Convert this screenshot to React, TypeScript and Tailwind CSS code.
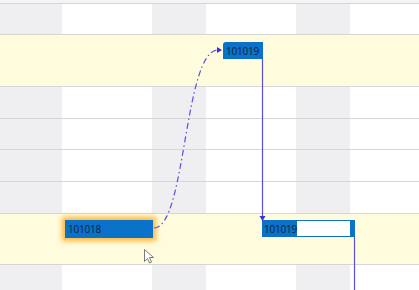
import React from "react";

const cols = [
  { w: "w-[62px]", gray: true },
  { w: "w-[90px]", gray: false },
  { w: "w-[54px]", gray: true },
  { w: "w-[90px]", gray: false },
  { w: "w-[54px]", gray: true },
  { w: "flex-1", gray: false },
];

const rows = [
  { h: "h-[31px]", hl: false },
  { h: "h-[52px]", hl: true },
  { h: "h-[32px]", hl: false },
  { h: "h-[31px]", hl: false },
  { h: "h-[32px]", hl: false },
  { h: "h-[32px]", hl: false },
  { h: "h-[51px]", hl: true },
  { h: "h-[40px]", hl: false },
];

function Row({ h, hl }: { h: string; hl: boolean }) {
  if (hl) {
    return <div className={`${h} border-b border-[#d6d6d6] bg-[#fefcdd]`} />;
  }
  return (
    <div className={`${h} flex border-b border-[#d6d6d6]`}>
      {cols.map((c, i) => (
        <div key={i} className={`${c.w} ${c.gray ? "bg-[#efeff1]" : "bg-white"}`} />
      ))}
    </div>
  );
}

export default function App() {
  return (
    <div
      className="relative h-[290px] w-[419px] overflow-hidden bg-white"
      style={{ fontFamily: '"Open Sans", "Noto Sans", sans-serif' }}
    >
      <div className="h-[4px] border-b border-[#d6d6d6] bg-[#f4f4f5]" />
      {rows.map((r, i) => (
        <Row key={i} h={r.h} hl={r.hl} />
      ))}

      {/* task bars */}
      <div className="absolute left-[223px] top-[42px] flex h-[17px] w-[40px] items-center rounded-tl-[3px] bg-[#0a72c8] pl-[3px] text-[10px] leading-none tracking-[-0.2px] text-[#13203a]">
        101019
      </div>

      <div className="absolute left-[65px] top-[220px] flex h-[18px] w-[88px] items-center bg-[#0a72c8] pl-[3px] text-[10px] leading-none tracking-[-0.2px] text-[#13203a] shadow-[0_0_5px_3px_rgba(255,172,30,0.85)]">
        101018
      </div>

      <div className="absolute left-[262px] top-[220px] flex h-[17px] w-[93px] border border-[#0a72c8] bg-white">
        <div className="w-[34px] bg-[#0a72c8]" />
        <div className="flex-1" />
        <div className="w-[4px] bg-[#0a72c8]" />
        <span className="absolute left-[1px] top-0 flex h-full items-center text-[10px] leading-none tracking-[-0.2px] text-[#13203a]">
          101019
        </span>
      </div>

      {/* connectors */}
      <svg className="absolute left-0 top-0" width={419} height={290} viewBox="0 0 419 290">
        <path
          d="M154 228 C 186 228, 184 50, 218 50"
          fill="none"
          stroke="#5a4fe0"
          strokeWidth={1.2}
          strokeDasharray="6 3 1.5 3"
        />
        <path d="M217 47 L222 50 L217 53 Z" fill="#3a2fd8" />
        <path d="M262.5 59 L262.5 217" stroke="#5a4fe0" strokeWidth={1.2} />
        <path d="M259.5 216 L262.5 221 L265.5 216 Z" fill="#3a2fd8" />
        <path d="M354.5 237 L354.5 290" stroke="#5a4fe0" strokeWidth={1.2} />
        {/* mouse cursor */}
        <path
          d="M144.5 249.5 L144.5 261.5 L147.5 258.5 L149.5 263 L151.5 262 L149.5 257.5 L153.5 257.5 Z"
          fill="#ffffff"
          stroke="#6b6b6b"
          strokeWidth={0.9}
          strokeLinejoin="round"
        />
      </svg>
    </div>
  );
}
